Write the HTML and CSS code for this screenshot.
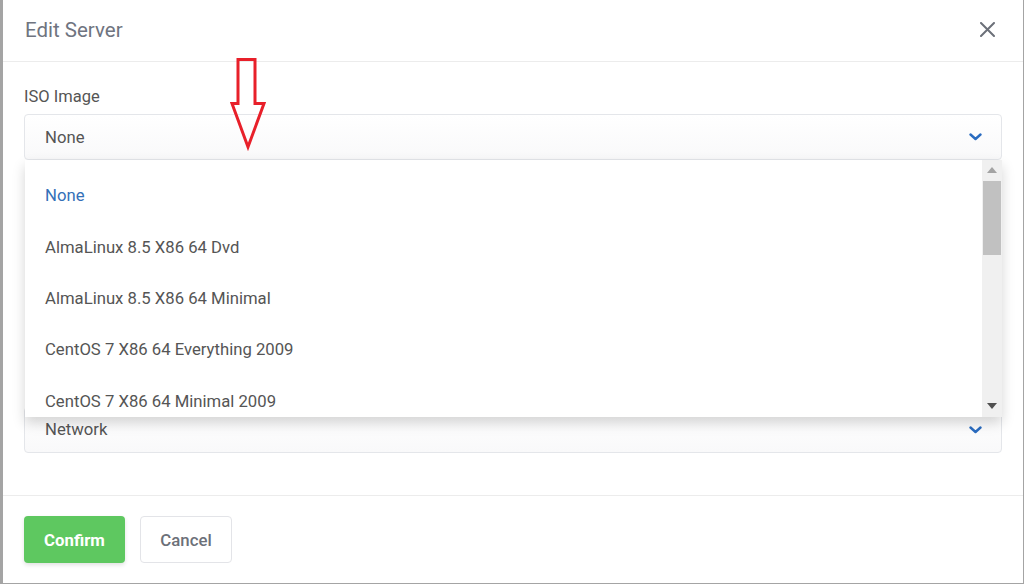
FILE: index.html
```html
<!DOCTYPE html>
<html lang="en">
<head>
  <meta charset="UTF-8" />
  <meta name="viewport" content="width=device-width, initial-scale=1.0"/>
  <title>Edit Server</title>
  <link rel="stylesheet" href="styles.css">
</head>
<body>

  <div class="modal">
    <header class="modal-header">
      <h2 class="modal-title">Edit Server</h2>
      <button class="close-btn" aria-label="Close">
        <svg width="15" height="15" viewBox="0 0 15 15"><path d="M1 1L14 14M14 1L1 14" stroke="#6c7079" stroke-width="2" stroke-linecap="round"/></svg>
      </button>
    </header>

    <div class="modal-body">
      <div class="form-group">
        <label>ISO Image</label>
        <div class="select-wrap">
          <div class="select">
            <span>None</span>
            <svg class="chevron" width="13" height="8" viewBox="0 0 13 8"><path d="M1.5 1.5L6.5 6L11.5 1.5" fill="none" stroke="#2a6cc0" stroke-width="2.4" stroke-linecap="round" stroke-linejoin="round"/></svg>
          </div>

          <!-- open option list -->
          <div class="dropdown">
            <ul class="options">
              <li class="selected">None</li>
              <li>AlmaLinux 8.5 X86 64 Dvd</li>
              <li>AlmaLinux 8.5 X86 64 Minimal</li>
              <li>CentOS 7 X86 64 Everything 2009</li>
              <li>CentOS 7 X86 64 Minimal 2009</li>
            </ul>
            <div class="scrollbar">
              <span class="sb-arrow up"></span>
              <div class="sb-track"><div class="sb-thumb"></div></div>
              <span class="sb-arrow down"></span>
            </div>
          </div>
        </div>
      </div>

      <!-- fields covered by the open list -->
      <div class="form-group covered">
        <label>Boot Order</label>
        <div class="select"><span>Disk</span></div>
      </div>

      <div class="form-group covered">
        <label>Template</label>
        <div class="select"><span>Default</span></div>
      </div>

      <div class="form-group last">
        <label class="covered">Network</label>
        <div class="select">
          <span>Network</span>
          <svg class="chevron" width="13" height="8" viewBox="0 0 13 8"><path d="M1.5 1.5L6.5 6L11.5 1.5" fill="none" stroke="#2a6cc0" stroke-width="2.4" stroke-linecap="round" stroke-linejoin="round"/></svg>
        </div>
      </div>
    </div>

    <footer class="modal-footer">
      <button class="btn btn-confirm">Confirm</button>
      <button class="btn btn-cancel">Cancel</button>
    </footer>

    <!-- hint arrow -->
    <svg class="hint-arrow" width="40" height="96" viewBox="228 56 40 96">
      <path d="M238 59.5H255V103.5H264L248 147L232 103.5H238Z" fill="none" stroke="#e8202a" stroke-width="3" stroke-linejoin="miter"/>
    </svg>
  </div>

</body>
</html>
```

FILE: styles.css
```css
* { margin:0; padding:0; box-sizing:border-box; font-family:'Roboto','Liberation Sans',sans-serif; }
html, body { width:1024px; height:584px; overflow:hidden; background:#fff; }

.modal {
  position:relative;
  width:1024px; height:584px;
  background:#fff;
  border-left:3px solid #a4a4a4;
  border-right:1px solid #a4a4a4;
  border-bottom:1px solid #a4a4a4;
  display:flex; flex-direction:column;
}

.modal-header {
  height:62px;
  padding:0 28px 2px 22px;
  border-bottom:1px solid #ececec;
  display:flex; justify-content:space-between; align-items:center;
}
.modal-title { font-size:20.5px; font-weight:400; color:#6f7480; }
.close-btn { background:none; border:none; width:15px; height:15px; display:flex; }

.modal-body { padding:25px 21px 42.5px 21px; }

.form-group { margin-bottom:24.5px; }
.form-group.last { margin-bottom:0; }
.form-group label { display:block; font-size:16.5px; line-height:20px; color:#555; margin-bottom:7px; }
.covered { visibility:hidden; }

.select-wrap { position:relative; }
.select {
  height:46px;
  padding:0 19px 0 20px;
  border:1px solid #e4e6ea;
  border-radius:4px;
  background:linear-gradient(#fff, #f9f9fa);
  display:flex; justify-content:space-between; align-items:center;
  font-size:16.7px; color:#555;
}

/* option list */
.dropdown {
  position:absolute; top:46px; left:1px; right:0;
  height:257px;
  background:#fff;
  box-shadow:0 6px 12px rgba(0,0,0,.17);
  display:flex;
  z-index:10;
}
.options { list-style:none; flex:1; padding-top:10px; }
.options li { padding:15.2px 20px; line-height:21px; font-size:16.7px; color:#555; }
.options li.selected { color:#3470b8; }

.scrollbar { width:20px; background:#f0f0f0; display:flex; flex-direction:column; align-items:center; }
.sb-arrow { width:0; height:0; border-left:5px solid transparent; border-right:5px solid transparent; margin:7px 0; }
.sb-arrow.up { border-bottom:6px solid #a3a3a3; }
.sb-arrow.down { border-top:6px solid #505050; margin-top:auto; margin-bottom:8px; }
.sb-track { width:100%; flex:1; padding:1px 1px 0; }
.sb-thumb { height:74px; background:#c1c1c1; }

.modal-footer {
  border-top:1px solid #ececec;
  padding:20px 21px 0;
  display:flex; gap:15px;
}
.btn { height:47px; border-radius:4px; font-size:16.8px; }
.btn-confirm {
  width:101px; background:#5ec860; border:none; color:#fff; font-weight:700;
  box-shadow:0 2px 4px rgba(0,0,0,.12);
}
.btn-cancel {
  width:92px; background:#fff; border:1px solid #e3e4e8; color:#6c7079; font-weight:500;
}

.hint-arrow { position:absolute; left:225px; top:56px; z-index:20; }
```
